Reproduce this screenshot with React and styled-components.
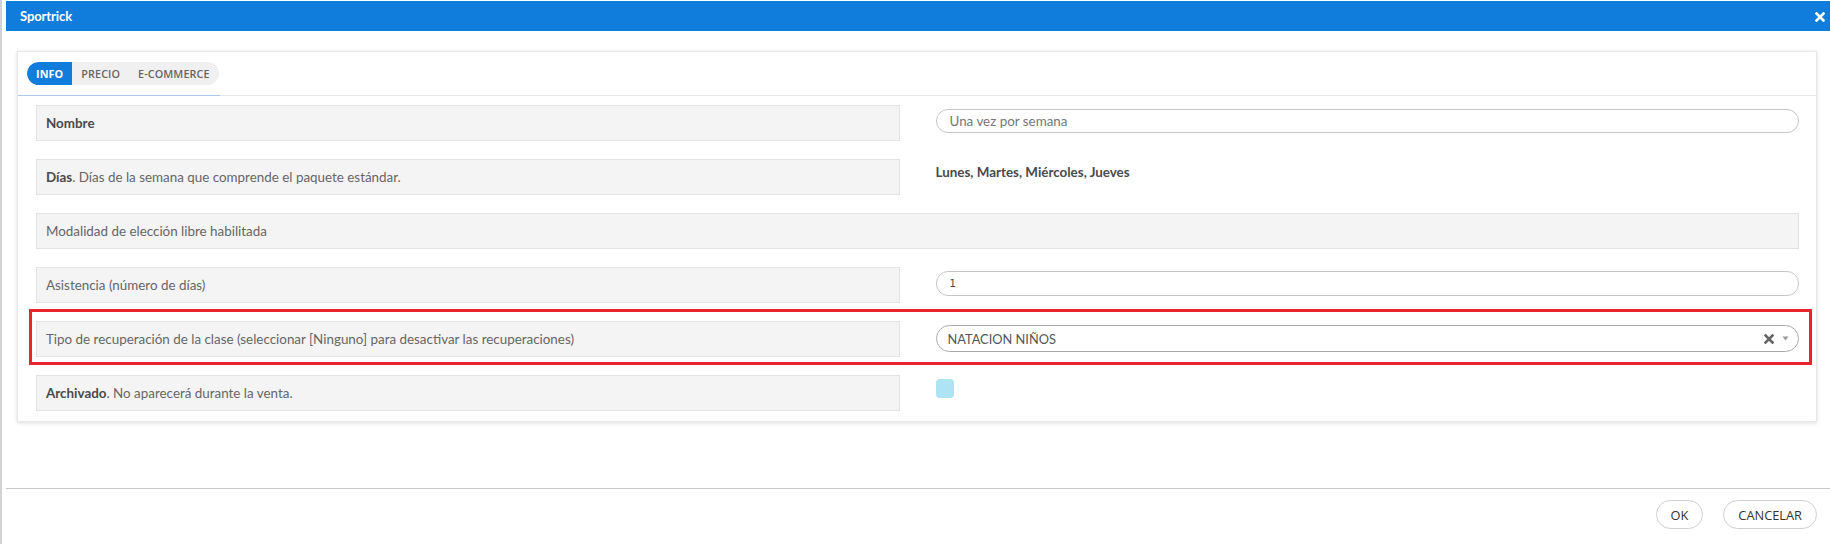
import React from "react";
import styled, { createGlobalStyle } from "styled-components";

const GlobalStyle = createGlobalStyle`
  html, body {
    margin: 0;
    padding: 0;
    background: #fff;
  }
  body {
    font-family: "Lato", "Open Sans", sans-serif;
    color: #555;
  }
  * {
    box-sizing: border-box;
  }
`;

const Cross = ({ size = 10, color = "#fff" }) => (
  <svg width={size} height={size} viewBox="0 0 10 10">
    <path d="M1.5 1.5 L8.5 8.5 M8.5 1.5 L1.5 8.5" stroke={color} strokeWidth="2.6" strokeLinecap="square" />
  </svg>
);

const Caret = () => (
  <svg width="7" height="5" viewBox="0 0 7 5">
    <path d="M0.5 0.5 H6.5 L3.5 4.5 Z" fill="#9a9a9a" />
  </svg>
);

export default function App() {
  return (
    <>
      <GlobalStyle />
      <Frame>
        <Header>
          <HeaderTitle>Sportrick</HeaderTitle>
          <CloseButton>
            <Cross size={10} />
          </CloseButton>
        </Header>

        <Body>
          <Card>
            <TabBar>
              <TabGroup>
                <TabPill>
                  <Tab $active>INFO</Tab>
                  <Tab>PRECIO</Tab>
                  <Tab>E-COMMERCE</Tab>
                </TabPill>
              </TabGroup>
            </TabBar>

            <Form>
              <Field>
                <LabelBox>
                  <strong>Nombre</strong>
                </LabelBox>
                <ValueCell>
                  <TextInput placeholder="Una vez por semana" readOnly />
                </ValueCell>
              </Field>

              <Field>
                <LabelBox>
                  <strong>Días</strong>. Días de la semana que comprende el paquete estándar.
                </LabelBox>
                <ValueCell>
                  <DaysText>Lunes, Martes, Miércoles, Jueves</DaysText>
                </ValueCell>
              </Field>

              <Field $full>
                <LabelBox>Modalidad de elección libre habilitada</LabelBox>
              </Field>

              <Field>
                <LabelBox>Asistencia (número de días)</LabelBox>
                <ValueCell>
                  <NumberInput>1</NumberInput>
                </ValueCell>
              </Field>

              <Highlight>
                <Field>
                  <LabelBox>
                    Tipo de recuperación de la clase (seleccionar [Ninguno] para desactivar las recuperaciones)
                  </LabelBox>
                  <ValueCell>
                    <Select>
                      <SelectValue>NATACION NIÑOS</SelectValue>
                      <SelectIcons>
                        <Cross size={10} color="#666" />
                        <Caret />
                      </SelectIcons>
                    </Select>
                  </ValueCell>
                </Field>
              </Highlight>

              <Field>
                <LabelBox>
                  <strong>Archivado</strong>. No aparecerá durante la venta.
                </LabelBox>
                <ValueCell>
                  <Checkbox />
                </ValueCell>
              </Field>
            </Form>
          </Card>
        </Body>

        <Footer>
          <FooterButton>OK</FooterButton>
          <FooterButton>CANCELAR</FooterButton>
        </Footer>
      </Frame>
    </>
  );
}

const Frame = styled.div`
  width: 1830px;
  height: 544px;
  display: flex;
  flex-direction: column;
  border-left: 2px solid #d3d3d3;
  padding-left: 4px;
  padding-top: 1px;
  overflow: hidden;
`;

const Header = styled.div`
  height: 30px;
  background: #107cdc;
  display: flex;
  align-items: center;
  justify-content: space-between;
  padding: 0 5px 0 14px;
  flex-shrink: 0;
`;

const HeaderTitle = styled.div`
  color: #fff;
  font-weight: 700;
  font-size: 13px;
  letter-spacing: -0.1px;
`;

const CloseButton = styled.div`
  display: flex;
  align-items: center;
  padding-top: 1px;
`;

const Body = styled.div`
  flex: 1;
  padding: 20px 13px 0 11px;
`;

const Card = styled.div`
  background: #fff;
  border: 1px solid #e8e8e8;
  box-shadow: 0 1px 4px rgba(0, 0, 0, 0.14);
`;

const TabBar = styled.div`
  display: flex;
  border-bottom: 1px solid #e6e6e6;
`;

const TabGroup = styled.div`
  padding: 10px 1px 10px 9px;
  border-bottom: 1px solid #a9cbef;
  margin-bottom: -1px;
`;

const TabPill = styled.div`
  display: flex;
  height: 23px;
  background: #f0f0f0;
  border-radius: 12px;
  overflow: hidden;
`;

const Tab = styled.div`
  display: flex;
  align-items: center;
  padding: 0 9px;
  font-family: "Open Sans", sans-serif;
  font-size: 10.8px;
  font-weight: ${(p) => (p.$active ? 700 : 600)};
  color: ${(p) => (p.$active ? "#fff" : "#666")};
  background: ${(p) => (p.$active ? "#107cdc" : "transparent")};
  border-radius: ${(p) => (p.$active ? "12px 0 0 12px" : "0")};
  letter-spacing: 0.1px;
`;

const Form = styled.div`
  display: flex;
  flex-direction: column;
  gap: 18px;
  padding: 9px 17px 10px 18px;
`;

const Field = styled.div`
  display: grid;
  grid-template-columns: ${(p) => (p.$full ? "1fr" : "1fr 1fr")};
  column-gap: 36px;
`;

const LabelBox = styled.div`
  height: 36px;
  display: flex;
  align-items: center;
  white-space: pre;
  padding: 0 9px;
  background: #f4f4f4;
  border: 1px solid #e2e2e2;
  font-size: 13.4px;
  color: #666;

  strong {
    color: #4a4a4a;
    font-weight: 700;
  }
`;

const ValueCell = styled.div`
  padding-top: 4px;
`;

const TextInput = styled.input`
  width: 100%;
  height: 24px;
  border: 1px solid #c6c6c6;
  border-radius: 12px;
  padding: 0 13px;
  font-family: "Lato", sans-serif;
  font-size: 13.4px;
  outline: none;

  &::placeholder {
    color: #777;
  }
`;

const NumberInput = styled.div`
  height: 25px;
  border: 1px solid #c6c6c6;
  border-radius: 12px;
  padding: 0 13px;
  display: flex;
  align-items: center;
  font-family: "DejaVu Sans", sans-serif;
  font-size: 10px;
  color: #444;
`;

const DaysText = styled.div`
  font-size: 13.4px;
  font-weight: 700;
  color: #4a4a4a;
  line-height: 16px;
  padding-top: 1px;
`;

const Highlight = styled.div`
  position: relative;

  &::after {
    content: "";
    position: absolute;
    top: -12px;
    bottom: -8px;
    left: -7px;
    right: -13px;
    border: 3px solid #e8242c;
    pointer-events: none;
  }
`;

const Select = styled.div`
  height: 27px;
  border: 1px solid #aaa;
  border-radius: 14px;
  padding: 0 9px 0 11px;
  display: flex;
  align-items: center;
  justify-content: space-between;
`;

const SelectValue = styled.span`
  font-size: 12.8px;
  color: #555;
`;

const SelectIcons = styled.span`
  display: flex;
  align-items: center;
  gap: 8px;
`;

const Checkbox = styled.div`
  width: 18px;
  height: 19px;
  background: #aee3f4;
  border-radius: 4px;
`;

const Footer = styled.div`
  height: 56px;
  flex-shrink: 0;
  border-top: 1px solid #c8c8c8;
  display: flex;
  justify-content: flex-end;
  align-items: flex-start;
  gap: 20px;
  padding: 11px 13px 0 0;
`;

const FooterButton = styled.div`
  height: 29px;
  padding: 0 14px;
  display: flex;
  align-items: center;
  border: 1px solid #cfcfcf;
  border-radius: 15px;
  font-family: "Open Sans", sans-serif;
  font-size: 12.8px;
  color: #333;
  background: #fff;
`;
